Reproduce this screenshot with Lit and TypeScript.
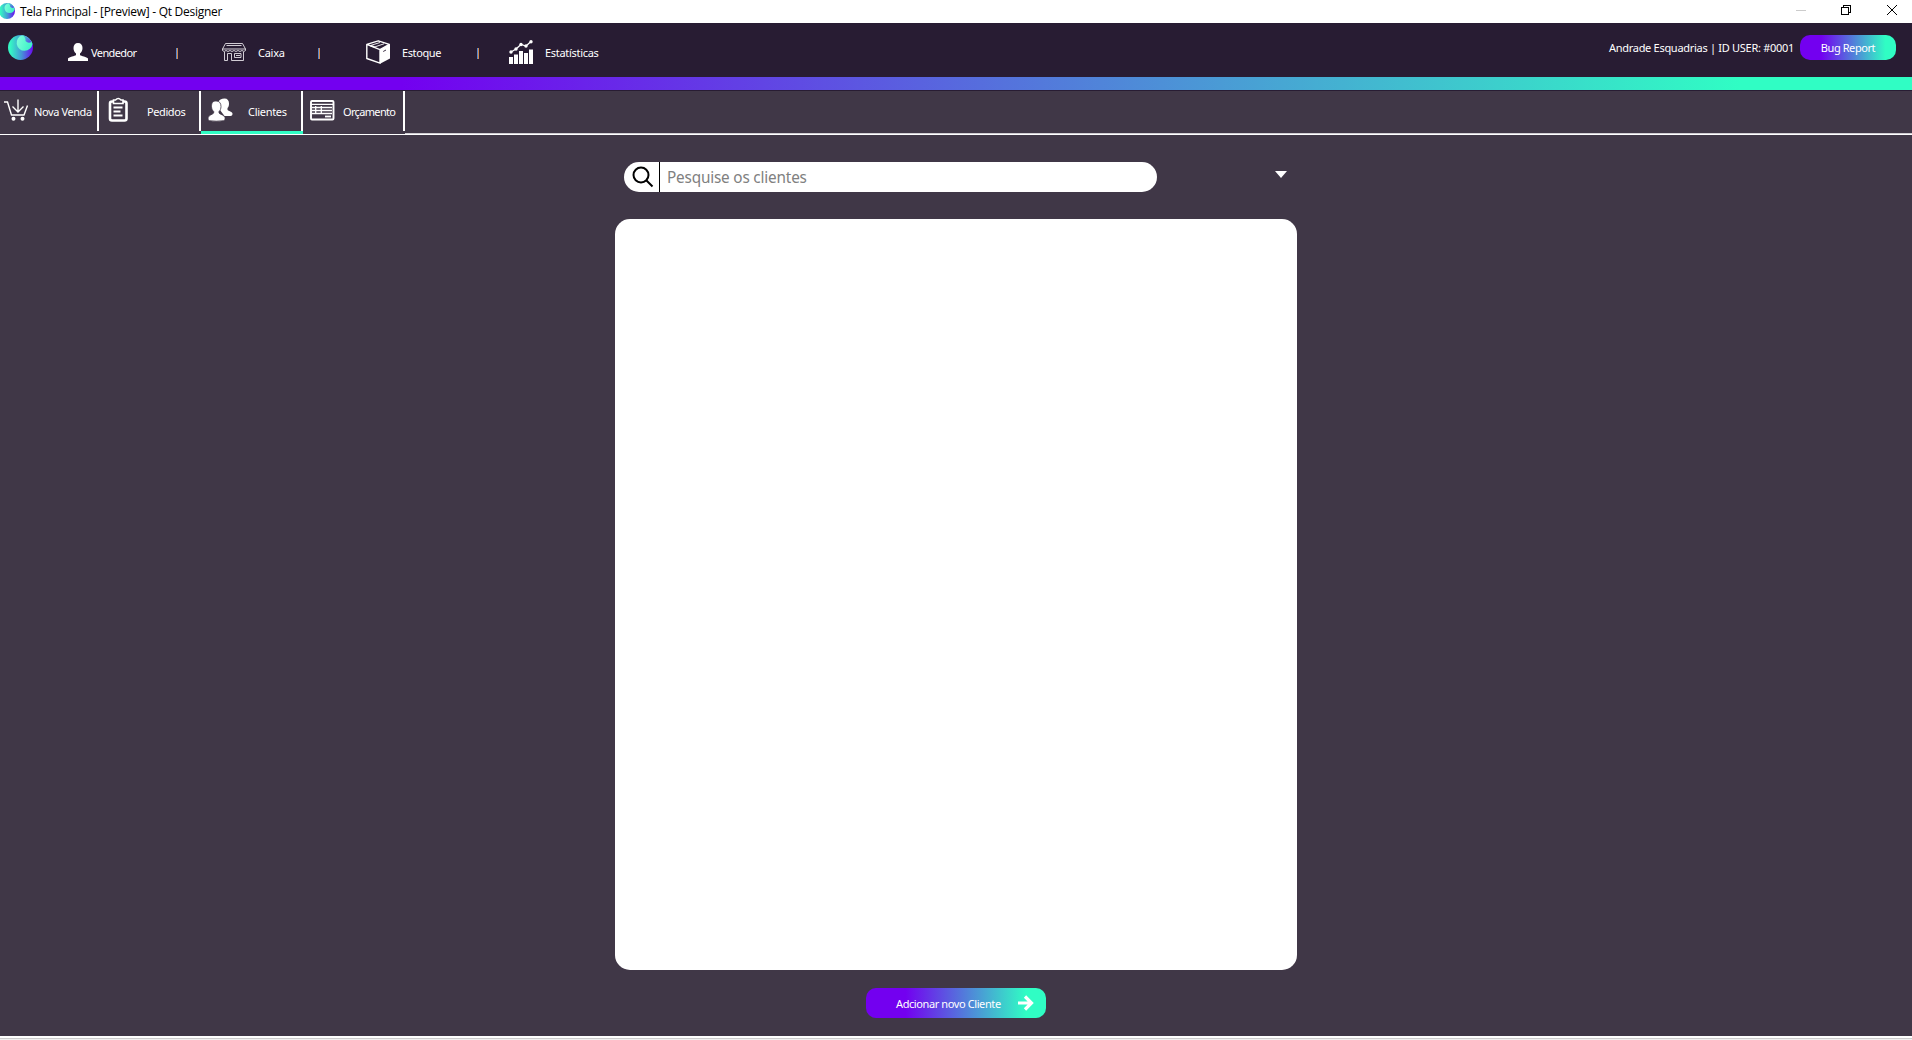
import { LitElement, html, svg, css } from "lit";
import { customElement } from "lit/decorators.js";

const moon = (id: string) => svg`
  <defs>
    <linearGradient id="${id}a" x1="0" x2="1"><stop offset=".1" stop-color="#35f5c4"/><stop offset=".55" stop-color="#4593d8"/><stop offset="1" stop-color="#6a08f0"/></linearGradient>
    <linearGradient id="${id}b" x1="0" x2="1" y1=".3" y2=".6"><stop offset="0" stop-color="#7dffd9"/><stop offset="1" stop-color="#3af0c8"/></linearGradient>
    <linearGradient id="${id}c" x1="0" x2="1" y1="0" y2="1"><stop offset="0" stop-color="#46d6cc"/><stop offset="1" stop-color="#5a40e8"/></linearGradient>
  </defs>
  <circle cx="12.5" cy="12.5" r="12.5" fill="url(#${id}a)"/>
  <path d="M14 .2A12.500 12.500 0 0 1 24.500 9A8 8 0 1 1 14 .2Z" fill="url(#${id}b)"/>
  <path d="M14.500 .2A12.500 12.500 0 0 1 23.500 7A5 5 0 0 1 17.500 6Q18 2.500 14.500 .2Z" fill="url(#${id}c)"/>`;

@customElement("app-root")
export class AppRoot extends LitElement {
  static styles = css`
    :host { display: flex; flex-direction: column; height: 1040px; width: 1912px; overflow: hidden; background: #403747; color: #fff; font: 11px/14px "Noto Sans", sans-serif; white-space: nowrap; }
    * { box-sizing: border-box; }
    svg { display: block; flex: none; overflow: visible; }
    .title { height: 23px; flex: none; background: #fff; color: #000; display: flex; align-items: flex-start; font: 12px/16px "Open Sans", sans-serif; }
    .title .logo { margin-top: 3px; }
    .title .name { margin: 4px 0 0 5px; letter-spacing: -.27px; }
    .win { margin: 0 0 0 auto; }
    .nav { height: 54px; flex: none; background: #281c33; display: flex; align-items: flex-start; }
    .item { display: flex; align-items: center; height: 28px; margin-top: 15px; }
    .item span { padding-top: 2px; letter-spacing: -.5px; }
    .nav .logo { margin: 12px 35px 0 8px; }
    .sep { width: 2px; height: 11px; margin-top: 25px; background: linear-gradient(90deg, #5587cc 50%, #d08a50 50%); }
    .item .t1 { margin-left: 3px; width: 85px; letter-spacing: -.6px; }
    .i2 { margin-left: 44px; } .item .t2 { margin-left: 12px; width: 60px; letter-spacing: -.25px; }
    .i3 { margin-left: 46px; } .item .t3 { margin-left: 12px; width: 75px; letter-spacing: -.4px; }
    .i4 { margin-left: 30px; } .item .t4 { margin-left: 12px; letter-spacing: -.3px; }
    .user { margin: 18px 6px 0 auto; letter-spacing: -.29px; }
    .bug { width: 96px; height: 25px; margin: 12px 16px 0 0; border-radius: 10px; display: grid; place-items: center; letter-spacing: -.43px; padding-top: 1px; }
    .grad { background: linear-gradient(90deg, #7300f0 22%, #30fdc4 89%); }
    .band { height: 13px; flex: none; background: linear-gradient(90deg, #7300f0 21%, #30fdc4 91%); }
    .tabs { height: 45px; flex: none; border-top: 1px solid #281c33; border-bottom: 1px solid #fff; display: flex; }
    .tab { height: 43px; display: flex; align-items: flex-start; }
    .tab .body { height: 40px; border-right: 2px solid #fff; display: flex; align-items: flex-start; width: 100%; }
    .tab span { margin-top: 14px; letter-spacing: -.4px; }
    .a { width: 99px; } .b, .c, .d { width: 102px; }
    .c { border-bottom: 3px solid #30fdc4; }
    .tab .c2 { letter-spacing: -.3px; }
    .tab .d2 { letter-spacing: -.66px; }
    .rest { flex: 1; border-bottom: 1px solid #d0cdd2; height: 43px; }
    .main { flex: 1; display: flex; flex-direction: column; align-items: center; }
    .tools { width: 682px; height: 30px; margin-top: 27px; padding-left: 9px; display: flex; }
    .search { width: 533px; height: 30px; border-radius: 15px; background: #fff; display: flex; color: #808080; font: 17px/30px "Noto Sans", sans-serif; }
    .glass { width: 36px; border-right: 1px solid #000; padding: 4px 0 0 8px; }
    .ph { margin-left: 7px; letter-spacing: -.2px; transform: scaleX(.9); transform-origin: left; }
    .arrow { margin: 9px 0 0 118px; }
    .list { width: 682px; height: 751px; margin-top: 27px; border-radius: 15px; background: #fff; }
    .add { width: 180px; height: 30px; margin-top: 18px; border-radius: 10px; display: flex; align-items: center; padding-left: 30px; letter-spacing: -.4px; }
    .add span { padding-top: 2px; }
    .add svg { margin-left: auto; margin-right: 12px; }
    .foot { height: 4px; flex: none; background: linear-gradient(#fff 0 2px, #ccc 2px 3px, #f0f0f0 3px); }
  `;

  render() {
    return html`
      <div class="title">
        <svg class="logo" width="15" height="16" viewBox="1.500 0 23.500 25">${moon("s")}</svg>
        <span class="name">Tela Principal - [Preview] - Qt Designer</span>
        <svg class="win" width="116" height="23" fill="none" shape-rendering="crispEdges">
          <path d="M0 10.500H10" stroke="#ccc"/>
          <path d="M45.500 7.500h7v7h-7zM47.500 7V5.500h7v7H53" stroke="#000"/>
          <path d="M91 5l10 10M101 5l-10 10" stroke="#000" shape-rendering="auto"/>
        </svg>
      </div>
      <div class="nav">
        <svg class="logo" width="25" height="25">${moon("n")}</svg>
        <div class="item">
          <svg width="20" height="18" viewBox="0 0 20 18" fill="#fff"><path d="M10 0c3 0 4.500 2 4.500 5 0 2.500-1 4.500-2.500 5.500v1.500c1 1 7 2 8 3.500v2.500H0v-2.500C1 14 7 13 8 12v-1.500C6.500 9.500 5.500 7.500 5.500 5c0-3 1.500-5 4.500-5Z"/></svg>
          <span class="t1">Vendedor</span>
        </div>
        <i class="sep"></i>
        <div class="item i2">
          <svg width="24" height="18" viewBox="0 0 24 18" fill="none" stroke="#e4e1e6" stroke-width=".9"><path d="M3.500.5h17l3 5.500H.5ZM4.500 2.500h15M.5 6v1.500q1.500 2 3.500 0 2 2 4 0 2 2 4 0 2 2 4 0 2 2 4 0 2 2 3.500 0V6M2.500 9v8.500h3V10.500h4v7h12V9M12.500 10.500h6.500v4h-6.500zM14 12.500h4"/></svg>
          <span class="t2">Caixa</span>
        </div>
        <i class="sep"></i>
        <div class="item i3">
          <svg width="24" height="24" viewBox="0 0 24 24"><path d="M.8 4.300 12.300.8 23.300 4.300 14 9.700ZM.8 4.300v14.200L14 23.200V9.700" fill="none" stroke="#fff" stroke-width="1.400" stroke-linejoin="round"/><path d="M4.500 5.500 14 2.500M8.500 7 18 3.800" fill="none" stroke="#fff" stroke-width=".9"/><path d="M4.300 5.600 8.600 7" stroke="#fff" stroke-width="1.600"/><path d="M14 9.700 24 4v14.500L14 23.800Z" fill="#fff"/><path d="M17.200 11.500 20 10" stroke="#281c33" stroke-width=".9"/></svg>
          <span class="t3">Estoque</span>
        </div>
        <i class="sep"></i>
        <div class="item i4">
          <svg width="24" height="24" viewBox="0 0 24 24" fill="#fff"><path d="M0 17h4v7H0zM5 14.500h4V24H5zM10 11h4v13h-4zM15 13h4v11h-4zM20 9.500h4V24h-4z"/><path d="M2 12 7 9l5-4.500 5 1.500 5-4.500" fill="none" stroke="#fff" stroke-width="1.300"/><circle cx="2" cy="12" r="1.700"/><circle cx="7" cy="9" r="1.700"/><circle cx="12" cy="4.500" r="1.700"/><circle cx="17" cy="6" r="1.700"/><circle cx="22" cy="1.700" r="1.700"/></svg>
          <span class="t4">Estatísticas</span>
        </div>
        <span class="user">Andrade Esquadrias | ID USER: #0001</span>
        <div class="bug grad">Bug Report</div>
      </div>
      <div class="band"></div>
      <div class="tabs">
        <div class="tab a"><div class="body">
          <svg width="34" height="40" fill="none" stroke="#fff" stroke-width="1.400"><path d="M4 11h3.500l4 13h12.500l3.500-9.500M18 8.500v12M12.500 15.500l5.500 5.500 5.500-5.500"/><circle cx="13.500" cy="27.700" r="1.300" fill="#fff"/><circle cx="22.500" cy="27.700" r="1.300" fill="#fff"/></svg>
          <span>Nova Venda</span></div></div>
        <div class="tab b"><div class="body">
          <svg width="48" height="40" fill="none" stroke="#fff" stroke-width="2.600"><rect x="11" y="10.500" width="16.500" height="19" rx="2"/><path d="M14.500 9h2q2.700-3 5.500 0h2v3.500h-9.500z" fill="#403747" stroke-width="1.600"/><path d="M14.500 16.500h9M14.500 20.500h7M14.500 24.500h9" stroke-width="1.800"/></svg>
          <span>Pedidos</span></div></div>
        <div class="tab c"><div class="body">
          <svg width="47" height="40" fill="#fff"><path d="M23.500 7.500c3 0 4.500 2 4.500 5 0 2-.5 3.500-1.500 4.500v2c1 1 4.500 1.500 5 3.500.2 1-.5 2.500-2 2.500h-6l-6-8V11c.5-2.300 3-3.500 6-3.500Z"/><path d="M15 10c3.500 0 5 2.200 5 5.500 0 2.200-.8 4-2 5v1.500c1 1.500 5.500 2 6 4.500.2 1.500 0 3-1.500 3.200q-7.500 1-14 0C7 29.500 7 28 7.200 26.500c.5-2.500 4.500-3 5.500-4.500v-1.500c-1.200-1-2.200-2.800-2.200-5C10.500 12.200 11.500 10 15 10Z" stroke="#403747" stroke-width=".8"/></svg>
          <span class="c2">Clientes</span></div></div>
        <div class="tab d"><div class="body">
          <svg width="40" height="40" fill="none" stroke="#fff" stroke-width="1.300"><rect x="8" y="10" width="22.500" height="18.500" rx="1" stroke-width="1.900"/><path d="M8 13.300h23M9 16.500h20M9 19.500h20M9 22.500h20M12.700 15v7.500M18.300 15v7.500"/><path d="M22 25.500h6" stroke-width="1.800"/></svg>
          <span class="d2">Orçamento</span></div></div>
        <div class="rest"></div>
      </div>
      <div class="main">
        <div class="tools">
          <div class="search">
            <div class="glass"><svg width="22" height="22" fill="none" stroke="#000" stroke-width="2"><circle cx="9" cy="9" r="7.500"/><path d="m14 14 6.500 6.500"/></svg></div>
            <span class="ph">Pesquise os clientes</span>
          </div>
          <svg class="arrow" width="12" height="7" fill="#fff"><path d="M0 0h12L6 7Z"/></svg>
        </div>
        <div class="list"></div>
        <div class="add grad"><span>Adcionar novo Cliente</span>
          <svg width="16" height="16" fill="none" stroke="#fff" stroke-width="3.200"><path d="M0 8h13M7 1.500 13.500 8 7 14.500"/></svg>
        </div>
      </div>
      <div class="foot"></div>
    `;
  }
}
